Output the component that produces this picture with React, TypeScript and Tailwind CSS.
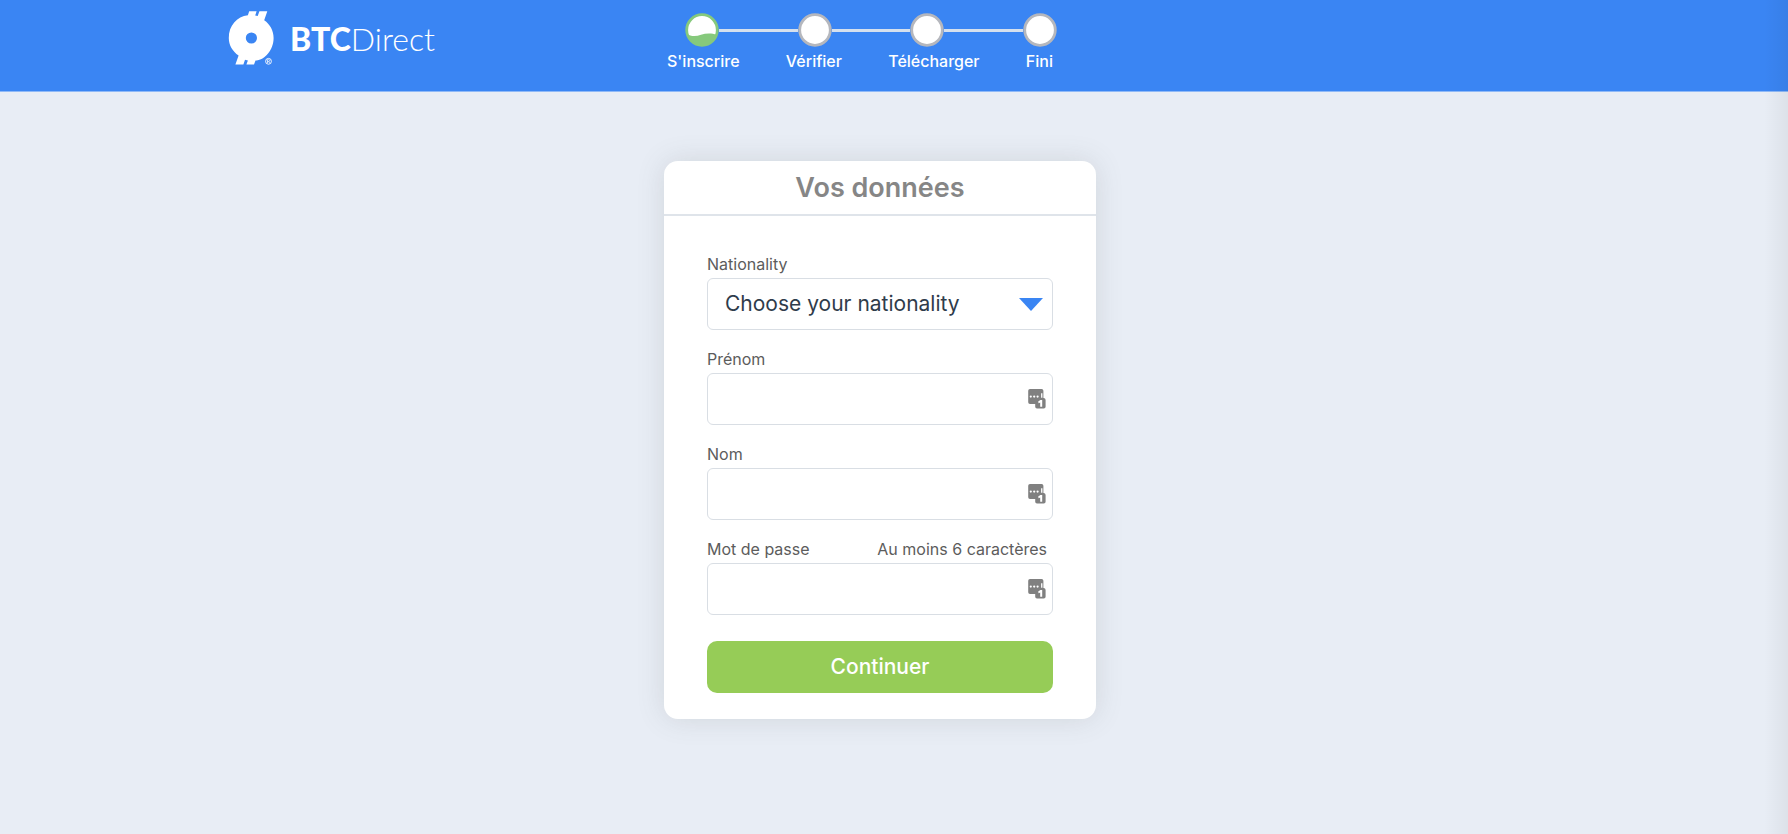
import React from "react";

function LogoMark() {
  return (
    <svg viewBox="0 0 46 56" className="h-[56px] w-[46px]" fill="#fff" aria-hidden="true">
      <path
        fillRule="evenodd"
        d="M21.2 1.3H28.6L27.2 5.4L29.7 6.1L31.4 1.3H39.3L36.2 10.2C42 14.2 45.6 20.6 45.6 27.9C45.6 40.2 36.6 49.6 28.4 50.4H27.5L26 54.6H18.4L19.9 50.4L17 49.8L15.4 54.6H7.4L10.6 45.4C4.6 41.4 0.8 35.1 0.8 27.9C0.8 15.6 8.9 6.6 19.9 5.3ZM29 28A5.6 5.6 0 1 0 17.8 28A5.6 5.6 0 1 0 29 28Z"
      />
      <circle cx="40.5" cy="51.3" r="2.9" fill="none" stroke="#fff" strokeWidth="0.9" />
      <path d="M39.5 53V49.7H40.8A0.9 0.9 0 0 1 40.8 51.5H39.6M40.6 51.5L41.7 53" fill="none" stroke="#fff" strokeWidth="0.7" />
    </svg>
  );
}

function StepCircle({ active }: { active?: boolean }) {
  return (
    <svg viewBox="0 0 34 34" className="h-[34px] w-[34px] shrink-0" aria-hidden="true">
      <circle cx="17" cy="17" r="15.3" fill="#fff" stroke={active ? "#86c97c" : "#b5b7bd"} strokeWidth="2.8" />
      {active && (
        <path d="M2.4 21C5 23.4 11 23.8 16 21.8C21 20.2 27 20 31.6 22A15.3 15.3 0 0 1 2.4 21Z" fill="#86c97c" />
      )}
    </svg>
  );
}

function PasswordManagerIcon() {
  return (
    <svg viewBox="0 0 18 20" className="pointer-events-none absolute top-4 right-[7px] h-5 w-[18px]" aria-hidden="true">
      <path
        d="M2 0H13.6A1.8 1.8 0 0 1 15.4 1.8V9H16A2 2 0 0 1 17.6 11V17.8A1.8 1.8 0 0 1 15.8 19.6H9A1.8 1.8 0 0 1 7.2 17.8V15H2A1.8 1.8 0 0 1 0.2 13.2V1.8A1.8 1.8 0 0 1 2 0Z"
        fill="#808080"
      />
      <g fill="#fff">
        <circle cx="2.8" cy="7.6" r="1.1" />
        <circle cx="6.2" cy="7.6" r="1.1" />
        <circle cx="9.6" cy="7.6" r="1.1" />
        <path d="M13.1 4.2H14.4V8.8H13.1ZM10.2 12.6L12.4 11H14.2V17.8H12.2V13.4L10.6 14.3Z" />
      </g>
    </svg>
  );
}

const steps = ["S'inscrire", "Vérifier", "Télécharger", "Fini"];

const fields = [
  { id: "firstname", label: "Prénom", type: "text", hint: "" },
  { id: "lastname", label: "Nom", type: "text", hint: "" },
  { id: "password", label: "Mot de passe", type: "password", hint: "Au moins 6 caractères" },
];

export default function App() {
  return (
    <div className="relative min-h-screen bg-[#e8edf5] font-['Inter',sans-serif]">
      <header className="border-b border-[#8fb9f7] bg-[#3a85f3] pr-7 text-white">
        <div className="mx-auto flex h-[91px] w-full max-w-[1304px] items-start">
          <a href="#" className="flex w-[439px] items-start gap-4 pt-[10px]">
            <LogoMark />
            <span className="pt-[9px] font-['Lato',sans-serif] text-[32px] leading-10">
              <span className="font-black">BTC</span>
              <span className="font-light">Direct</span>
            </span>
          </a>
          <div className="w-[390px] pt-[13px]">
            <div className="flex items-center pl-[18px]">
              {steps.map((step, i) => (
                <React.Fragment key={step}>
                  {i > 0 && <span className="h-[3px] flex-1 bg-[#d5e0ee]" />}
                  <StepCircle active={i === 0} />
                </React.Fragment>
              ))}
            </div>
            <ol className="flex justify-between pt-[2px] pr-1 text-[16px] leading-6 font-medium">
              {steps.map((step) => (
                <li key={step}>{step}</li>
              ))}
            </ol>
          </div>
        </div>
      </header>

      <main className="pt-[69px] pr-7 pb-16">
        <form
          className="mx-auto w-full max-w-[432px] rounded-[14px] bg-white shadow-[0_0_28px_rgba(85,95,95,0.16)]"
          onSubmit={(e) => e.preventDefault()}
        >
          <h1 className="border-b-2 border-[#dfe4ea] text-center text-[27px] leading-[53px] font-semibold text-[#868686]">
            Vos données
          </h1>
          <div className="px-[43px] pt-9 pb-[26px]">
            <label htmlFor="nationality" className="block pb-[2px] text-[16px] leading-6 text-[#5c5c5c]">
              Nationality
            </label>
            <div className="relative">
              <select
                id="nationality"
                className="block h-[52px] w-full appearance-none rounded-md border border-[#d9dee4] bg-white pr-12 pl-[17px] text-[21px] text-[#2f3c4b]"
              >
                <option>Choose your nationality</option>
              </select>
              <svg viewBox="0 0 24 13" className="pointer-events-none absolute top-5 right-[10px] h-[13px] w-6" aria-hidden="true">
                <path d="M0 0H24L12 13Z" fill="#3a85f3" />
              </svg>
            </div>

            {fields.map((field) => (
              <div key={field.id} className="pt-[17px]">
                <div className="flex justify-between pr-[6px] pb-[2px] text-[16px] leading-6 text-[#5c5c5c]">
                  <label htmlFor={field.id}>{field.label}</label>
                  {field.hint && <span>{field.hint}</span>}
                </div>
                <div className="relative">
                  <input
                    id={field.id}
                    type={field.type}
                    className="block h-[52px] w-full rounded-md border border-[#d9dee4] bg-white pr-10 pl-4 text-[21px] text-[#2f3c4b]"
                  />
                  <PasswordManagerIcon />
                </div>
              </div>
            ))}

            <button
              type="submit"
              className="mt-[26px] block h-[52px] w-full rounded-[10px] bg-[#96cc57] text-[21px] font-medium text-white"
            >
              Continuer
            </button>
          </div>
        </form>
      </main>

      <div className="pointer-events-none absolute inset-y-0 right-0 w-6 bg-linear-to-r from-transparent to-black/5" />
    </div>
  );
}
